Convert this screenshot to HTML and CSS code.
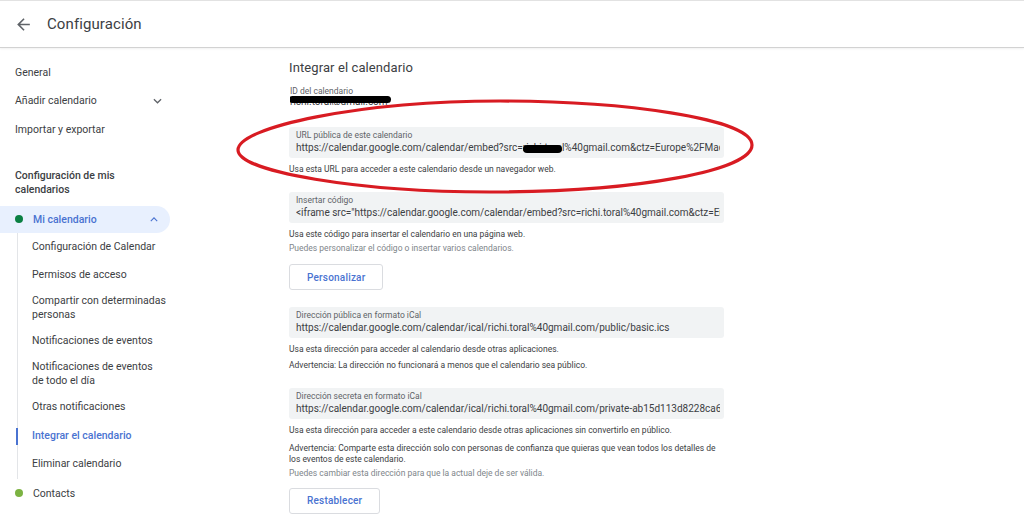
FILE: index.html
```html
<!DOCTYPE html>
<html lang="es">
<head>
  <meta charset="UTF-8" />
  <meta name="viewport" content="width=device-width, initial-scale=1.0"/>
  <title>Configuración</title>
  <link rel="stylesheet" href="styles.css">
</head>
<body>
  <header class="topbar">
    <svg class="back" viewBox="0 0 24 24" width="19" height="19"><path d="M20 11H7.83l5.59-5.59L12 4l-8 8 8 8 1.41-1.41L7.83 13H20v-2z" fill="#5f6368"/></svg>
    <span class="title">Configuración</span>
  </header>

  <div class="layout">
    <nav class="sidebar">
      <div class="nav-item">General</div>
      <div class="nav-item">
        Añadir calendario
        <svg class="chev" viewBox="0 0 10 6" width="9" height="6"><path d="M1 1l4 4 4-4" fill="none" stroke="#5f6368" stroke-width="1.4"/></svg>
      </div>
      <div class="nav-item">Importar y exportar</div>

      <div class="nav-heading">Configuración de mis calendarios</div>

      <div class="nav-cal open">
        <span class="dot dark"></span>
        Mi calendario
        <svg class="chev" viewBox="0 0 10 6" width="8" height="5"><path d="M1 5l4-4 4 4" fill="none" stroke="#4a73d1" stroke-width="1.4"/></svg>
      </div>
      <div class="sub-list">
        <div class="sub-item">Configuración de Calendar</div>
        <div class="sub-item">Permisos de acceso</div>
        <div class="sub-item">Compartir con determinadas personas</div>
        <div class="sub-item">Notificaciones de eventos</div>
        <div class="sub-item">Notificaciones de eventos de&nbsp;todo&nbsp;el&nbsp;día</div>
        <div class="sub-item">Otras notificaciones</div>
        <div class="sub-item active">Integrar el calendario</div>
        <div class="sub-item">Eliminar calendario</div>
      </div>
      <div class="nav-cal">
        <span class="dot light"></span>
        Contacts
      </div>
    </nav>

    <main class="content">
      <h2>Integrar el calendario</h2>

      <div class="id-block">
        <div class="label">ID del calendario</div>
        <div class="id-value"><span class="redacted">richi.toral@gmail.com</span></div>
      </div>

      <section class="field-group">
        <div class="field">
          <div class="label">URL pública de este calendario</div>
          <div class="value">https://calendar.google.com/calendar/embed?src=<span class="redacted blob">richi.toral</span>%40gmail.com&amp;ctz=Europe%2FMadrid</div>
        </div>
        <p class="help">Usa esta URL para acceder a este calendario desde un navegador web.</p>
      </section>

      <section class="field-group">
        <div class="field">
          <div class="label">Insertar código</div>
          <div class="value">&lt;iframe src="https://calendar.google.com/calendar/embed?src=richi.toral%40gmail.com&amp;ctz=Europe%2FMadrid"</div>
        </div>
        <p class="help">Usa este código para insertar el calendario en una página web.</p>
        <p class="help muted">Puedes personalizar el código o insertar varios calendarios.</p>
        <button class="btn">Personalizar</button>
      </section>

      <section class="field-group">
        <div class="field">
          <div class="label">Dirección pública en formato iCal</div>
          <div class="value">https://calendar.google.com/calendar/ical/richi.toral%40gmail.com/public/basic.ics</div>
        </div>
        <p class="help">Usa esta dirección para acceder al calendario desde otras aplicaciones.</p>
        <p class="help warn">Advertencia: La dirección no funcionará a menos que el calendario sea público.</p>
      </section>

      <section class="field-group">
        <div class="field">
          <div class="label">Dirección secreta en formato iCal</div>
          <div class="value">https://calendar.google.com/calendar/ical/richi.toral%40gmail.com/private-ab15d113d8228ca6e1/basic.ics</div>
        </div>
        <p class="help">Usa esta dirección para acceder a este calendario desde otras aplicaciones sin convertirlo en público.</p>
        <p class="help warn long">Advertencia: Comparte esta dirección solo con personas de confianza que quieras que vean todos los detalles de los eventos de este calendario.</p>
        <p class="help muted">Puedes cambiar esta dirección para que la actual deje de ser válida.</p>
        <button class="btn last">Restablecer</button>
      </section>
    </main>
  </div>

  <!-- hand-drawn annotation -->
  <svg class="annotation" viewBox="0 0 1024 521" width="1024" height="521">
    <path d="M500 101 C 620 101, 752 118, 752 145 C 752 170, 640 192, 490 192 C 360 192, 238 172, 238 150 C 238 127, 360 101, 500 101 Z" fill="none" stroke="#d81b22" stroke-width="3.2"/>
  </svg>
</body>
</html>
```

FILE: styles.css
```css
* {
  box-sizing: border-box;
}

body {
  margin: 0;
  background: #fff;
  font-family: Roboto, "Liberation Sans", Arial, sans-serif;
  color: #3c4043;
  overflow: hidden;
}

.topbar {
  height: 48px;
  border-top: 1px solid #e2e2e2;
  border-bottom: 1px solid #d2d2d2;
  box-shadow: 0 1px 2px rgba(0, 0, 0, 0.06);
  display: flex;
  align-items: center;
  padding-left: 14px;
}

.back {
  margin-right: 14px;
}

.title {
  font-size: 15px;
  color: #3c4043;
  letter-spacing: 0.1px;
}

.layout {
  display: flex;
}

/* sidebar */
.sidebar {
  width: 170px;
  flex-shrink: 0;
  padding-top: 10px;
  font-size: 10.5px;
}

.nav-item {
  display: flex;
  align-items: center;
  justify-content: space-between;
  height: 28.5px;
  padding: 0 8px 0 15px;
}

.nav-heading {
  font-weight: 500;
  line-height: 14px;
  padding: 25px 40px 9px 15px;
}

.nav-cal {
  display: flex;
  align-items: center;
  height: 27px;
  padding-left: 15px;
  border-radius: 0 14px 14px 0;
}

.nav-cal.open {
  background: #e8f0fe;
  color: #4a73d1;
  font-weight: 500;
}

.nav-cal .chev {
  margin-left: auto;
  margin-right: 12px;
}

.dot {
  width: 8px;
  height: 8px;
  border-radius: 50%;
  margin-right: 10px;
}

.dot.dark {
  background: #0b8043;
}

.dot.light {
  background: #7cb342;
}

.sub-list {
  margin-left: 17px;
  border-left: 1px solid #e3e5e8;
  margin-bottom: 1px;
}

.sub-item {
  position: relative;
  display: flex;
  align-items: center;
  min-height: 28.5px;
  padding: 4.75px 2px 4.75px 14px;
  line-height: 14px;
}

.sub-item.active {
  color: #4a73d1;
  font-weight: 500;
}

.sub-item.active::before {
  content: "";
  position: absolute;
  left: -2px;
  top: 6px;
  bottom: 5px;
  width: 2px;
  background: #4a73d1;
}

/* main */
.content {
  width: 435px;
  margin-left: 119px;
  padding-top: 12px;
}

h2 {
  margin: 0;
  font-size: 13px;
  font-weight: 400;
  line-height: 16px;
  color: #3c4043;
  letter-spacing: 0.1px;
}

.label {
  font-size: 8.5px;
  line-height: 10px;
  color: #5f6368;
}

.id-block {
  margin-top: 10px;
  padding-left: 1px;
}

.id-value {
  font-size: 10px;
  line-height: 12px;
  height: 9px;
  overflow: hidden;
}

.redacted {
  position: relative;
}

.redacted::after {
  content: "";
  position: absolute;
  left: -1px;
  right: -3px;
  top: 0;
  height: 7px;
  border-radius: 4px;
  background: #000;
}

.blob::after {
  left: 0;
  right: 2px;
  top: 3px;
  height: 8px;
}

.field-group {
  margin-top: 22px;
}

.field-group + .field-group {
  margin-top: 17px;
}

.field {
  background: #f1f3f4;
  border-radius: 3px;
  padding: 3px 4px 3px 7px;
}

.value {
  font-size: 10px;
  line-height: 15px;
  white-space: nowrap;
  overflow: hidden;
  color: #3c4043;
}

.help {
  margin: 6px 0 0;
  font-size: 8.5px;
  line-height: 11px;
  color: #3c4043;
}

.help.warn {
  margin-top: 5px;
}

.help.warn.long {
  margin-top: 6.5px;
}

.help.muted {
  margin-top: 3px;
  color: #80868b;
}

.btn {
  display: block;
  margin-top: 10px;
  height: 26px;
  padding: 0 17px;
  background: #fff;
  border: 1px solid #dadce0;
  border-radius: 3px;
  color: #4a73d1;
  font-family: Roboto, "Liberation Sans", Arial, sans-serif;
  font-size: 10px;
  font-weight: 500;
  letter-spacing: 0.2px;
}

.btn.last {
  margin-top: 9px;
}

.annotation {
  position: absolute;
  top: 0;
  left: 0;
  pointer-events: none;
}
```
